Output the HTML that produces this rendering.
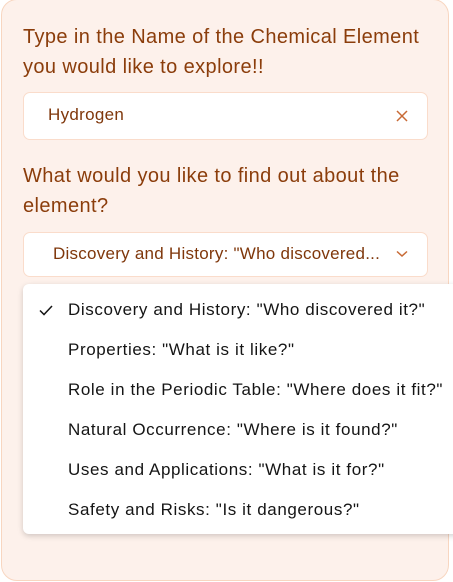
<!DOCTYPE html>
<html><head><style>
*{margin:0;padding:0;box-sizing:border-box}
body{width:453px;height:582px;background:#fff;font-family:"Liberation Sans",sans-serif;position:relative;overflow:hidden}
.card{position:absolute;left:1px;top:-1px;width:448px;height:582px;background:#fdf1eb;border:1.5px solid #f8d6c0;border-radius:16px}
.h{position:absolute;left:23px;color:#8b3d0b;font-size:20px;line-height:30px;letter-spacing:0.4px;white-space:nowrap}
.box{position:absolute;left:23px;width:405px;background:#fff;border:1px solid #fadccb;border-radius:7px}
.txt{position:absolute;color:#7f370b;font-size:17px;letter-spacing:0.3px;white-space:nowrap}
.dd{position:absolute;left:23px;top:284px;width:440px;height:250px;background:#fff;border-radius:6px;box-shadow:0 2px 6px rgba(0,0,0,.18)}
.it{position:absolute;left:45px;font-size:17px;letter-spacing:0.6px;color:#151515;white-space:nowrap}
</style></head><body>
<div class="card"></div>
<div class="h" style="top:22px">Type in the Name of the Chemical Element<br>you would like to explore!!</div>
<div class="box" style="top:92px;height:48px"></div>
<div class="txt" style="left:48px;top:105px">Hydrogen</div>
<svg style="position:absolute;left:395px;top:109px" width="14" height="14" viewBox="0 0 14 14"><path d="M2 2L12 12M12 2L2 12" stroke="#c86a35" stroke-width="1.5" fill="none"/></svg>
<div class="h" style="top:161px">What would you like to find out about the<br>element?</div>
<div class="box" style="top:232px;height:45px"></div>
<div class="txt" style="left:53px;top:244px;letter-spacing:0.25px">Discovery and History: "Who discovered...</div>
<svg style="position:absolute;left:396px;top:250px" width="12" height="8" viewBox="0 0 12 8"><path d="M1 1.5L6 6L11 1.5" stroke="#c86a35" stroke-width="1.5" fill="none"/></svg>
<div class="dd">
<svg style="position:absolute;left:16px;top:21px" width="14" height="11" viewBox="0 0 14 11"><path d="M1 5.5L5 9.5L13 1" stroke="#151515" stroke-width="1.5" fill="none"/></svg>
<div class="it" style="top:16px">Discovery and History: "Who discovered it?"</div>
<div class="it" style="top:56px">Properties: "What is it like?"</div>
<div class="it" style="top:96px">Role in the Periodic Table: "Where does it fit?"</div>
<div class="it" style="top:136px">Natural Occurrence: "Where is it found?"</div>
<div class="it" style="top:176px">Uses and Applications: "What is it for?"</div>
<div class="it" style="top:216px">Safety and Risks: "Is it dangerous?"</div>
</div>
</body></html>
